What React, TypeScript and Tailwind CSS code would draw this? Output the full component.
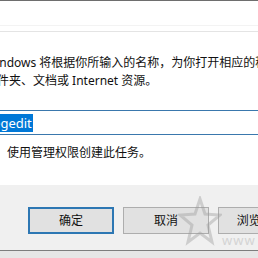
import React from 'react';

const font = { fontFamily: '"Noto Sans", "Noto Sans CJK SC", sans-serif' };

function Btn({ label, focused }: { label: string; focused?: boolean }) {
  return (
    <div
      className={`w-[86px] h-[27px] shrink-0 flex items-center justify-center bg-[#e1e1e1] text-[12px] text-[#111] ${
        focused ? 'border-2 border-[#2d77b3]' : 'border border-[#adadad]'
      }`}
    >
      {label}
    </div>
  );
}

export default function App() {
  return (
    <div className="relative w-[258px] h-[258px] overflow-hidden bg-white flex flex-col" style={font}>
      {/* window top edge */}
      <div className="h-px bg-[#6e6e6e]" />
      <div className="h-[24px]" />
      <div className="h-px bg-[#f3f3f3]" />
      <div className="h-[5px]" />
      <div className="h-px bg-[#e4e4e4]" />

      {/* description */}
      <div className="pt-[22px] ml-[-15px] text-[12px] leading-[18px] text-[#111] whitespace-nowrap">
        <div>Windows 将根据你所输入的名称，为你打开相应的程序、</div>
        <div>文件夹、文档或 Internet 资源。</div>
      </div>

      {/* run input */}
      <div className="mt-[20px] ml-[-20px] w-[300px] h-[25px] border-y border-[#3a78ad] flex items-center pl-[7px]">
        <span className="bg-[#0078d7] text-white text-[13px] leading-[18px] px-px">regedit</span>
      </div>

      {/* admin checkbox label */}
      <div className="mt-[9px] pl-[7px] text-[12px] leading-[18px] text-[#111] whitespace-nowrap">
        使用管理权限创建此任务。
      </div>

      <div className="h-[23px]" />

      {/* button bar */}
      <div className="h-[65px] bg-[#f0f0f0] pt-[22px] pl-[28px] flex items-start gap-[9px]">
        <Btn label="确定" focused />
        <Btn label="取消" />
        <Btn label="浏览(B)..." />
      </div>
      <div className="h-px bg-[#7d7d7d]" />
      <div className="flex-1 bg-[#e6e6e6]" />

      {/* watermark */}
      <svg className="absolute left-[178px] top-[196px] opacity-40" width="44" height="52" viewBox="0 0 44 52">
        <path
          d="M22 3 L27 18 L42 19 L30 29 L34 46 L22 37 L10 46 L14 29 L2 19 L17 18 Z"
          fill="none"
          stroke="#9a9a9a"
          strokeWidth="3"
        />
      </svg>
      <div className="absolute left-[222px] top-[234px] text-[13px] leading-none text-[#d4d4d4] tracking-[1px]">www</div>
    </div>
  );
}
